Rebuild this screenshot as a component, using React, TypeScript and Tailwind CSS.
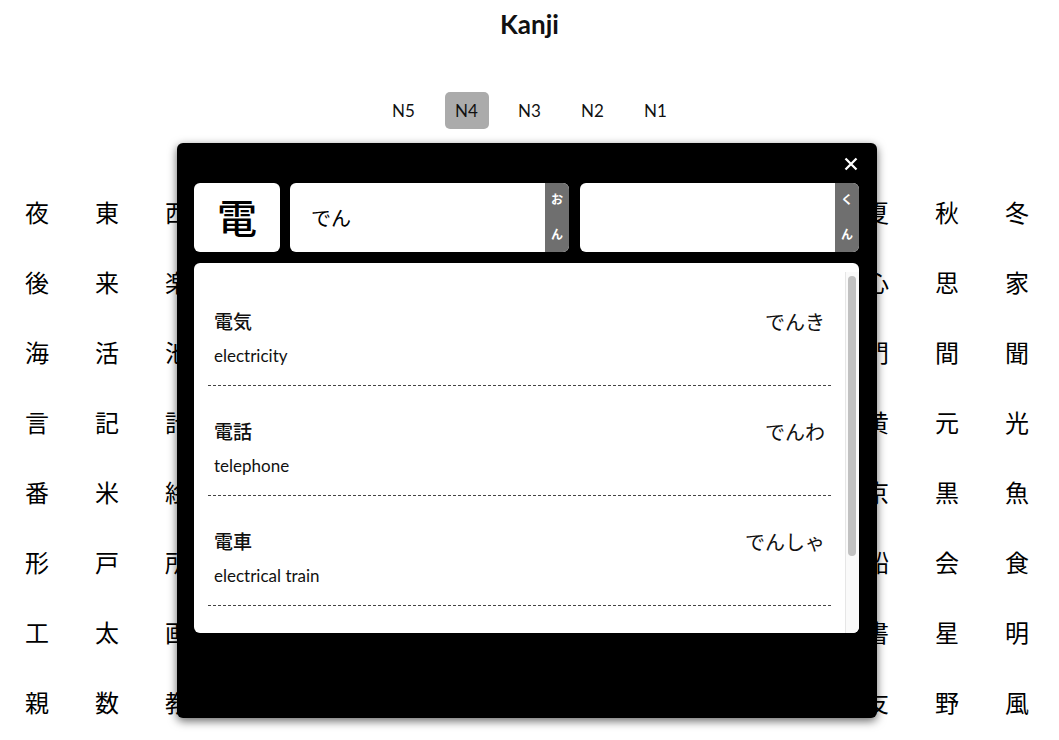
import { useState } from "react";

const levels = ["N5", "N4", "N3", "N2", "N1"];

const kanjiRows = [
	"夜東西南北朝昼夕方晩週春夏秋冬",
	"後来楽歌音声色体力心意病心思家",
	"海活池洋地田町村区県市都門間聞",
	"言記計話語読書作究験試赤黄元光",
	"番米絵茶飯肉野菜料理味鳥京黒魚",
	"形戸所屋室堂館院駅道通走船会食",
	"工太画映写真字文紙本図館書星明",
	"親数教習勉強学校授業質問友野風",
];

const words = [
	{ word: "電気", reading: "でんき", meaning: "electricity" },
	{ word: "電話", reading: "でんわ", meaning: "telephone" },
	{ word: "電車", reading: "でんしゃ", meaning: "electrical train" },
];

function CloseIcon() {
	return (
		<svg width="14" height="14" viewBox="0 0 14 14" fill="none">
			<path d="M1.5 1.5 L12.5 12.5 M12.5 1.5 L1.5 12.5" stroke="white" strokeWidth="2.3" />
		</svg>
	);
}

function ReadingBox({ value, label }: { value: string; label: string }) {
	return (
		<div className="flex flex-1 bg-white rounded-[6px] overflow-hidden">
			<div className="flex-1 flex items-center pl-[21px] text-[20px] text-black">{value}</div>
			<div className="w-[24px] bg-[#6f6f6f] flex flex-col items-center justify-around text-white text-[12px] font-bold leading-none">
				{label.split("").map((c, i) => (
					<span key={i}>{c}</span>
				))}
			</div>
		</div>
	);
}

function KanjiModal() {
	return (
		<div className="absolute left-[177px] top-[143px] w-[700px] h-[575px] bg-black rounded-[6px] shadow-[0_3px_10px_rgba(0,0,0,0.6)] pl-[17px] pr-[18px] flex flex-col">
			<div className="h-[40px] flex justify-end items-center pr-[1px]">
				<button className="pt-[2px]">
					<CloseIcon />
				</button>
			</div>
			<div className="flex h-[69px]">
				<div className="w-[86px] mr-[10px] bg-white rounded-[6px] flex items-center justify-center text-[40px] font-medium text-black">
					電
				</div>
				<ReadingBox value="でん" label="おん" />
				<div className="w-[11px]" />
				<ReadingBox value="" label="くん" />
			</div>
			<div className="mt-[11px] h-[370px] bg-white rounded-[6px] pt-[9px] flex flex-col overflow-hidden">
				<div className="flex flex-1 min-h-0">
					<div className="flex-1 overflow-hidden pt-[4px]">
						{words.map((w) => (
							<div key={w.word} className="mx-[14px] border-b border-dashed border-[#444] pt-[35px] pb-[19px] px-[6px]">
								<div className="flex justify-between items-center h-[22px]">
									<span className="text-[19px] font-medium">{w.word}</span>
									<span className="text-[20px]">{w.reading}</span>
								</div>
								<div className="mt-[13px] h-[20px] flex items-center text-[17px]">{w.meaning}</div>
							</div>
						))}
					</div>
					<div className="w-[14px] bg-[#fafafa] border-l border-[#e6e6e6] pt-[4px] pl-[2px] pr-[3px]">
						<div className="h-[280px] rounded-full bg-[#c1c1c1]" />
					</div>
				</div>
			</div>
		</div>
	);
}

export default function App() {
	const [level, setLevel] = useState("N4");

	return (
		<div
			className="relative h-screen overflow-hidden bg-white text-[#111]"
			style={{ fontFamily: 'Lato, "Noto Sans CJK JP", sans-serif' }}
		>
			<div className="pt-[8px] h-[40px] text-center">
				<h1 className="text-[26px] leading-[32px] font-bold">Kanji</h1>
			</div>
			<div className="mt-[52px] flex justify-center gap-[19px]">
				{levels.map((l) => (
					<button
						key={l}
						onClick={() => setLevel(l)}
						className={
							"h-[37px] w-[44px] rounded-[5px] text-[17px] flex items-center justify-center " +
							(l === level ? "bg-[#ababab]" : "")
						}
					>
						{l}
					</button>
				))}
			</div>
			<div className="mt-[49px] pl-[2px] grid grid-cols-[repeat(15,70px)]">
				{kanjiRows.map((row) =>
					row.split("").map((k, i) => (
						<div key={row + i} className="h-[70px] flex items-center justify-center text-[24px] text-black">
							{k}
						</div>
					))
				)}
			</div>
			<KanjiModal />
		</div>
	);
}
